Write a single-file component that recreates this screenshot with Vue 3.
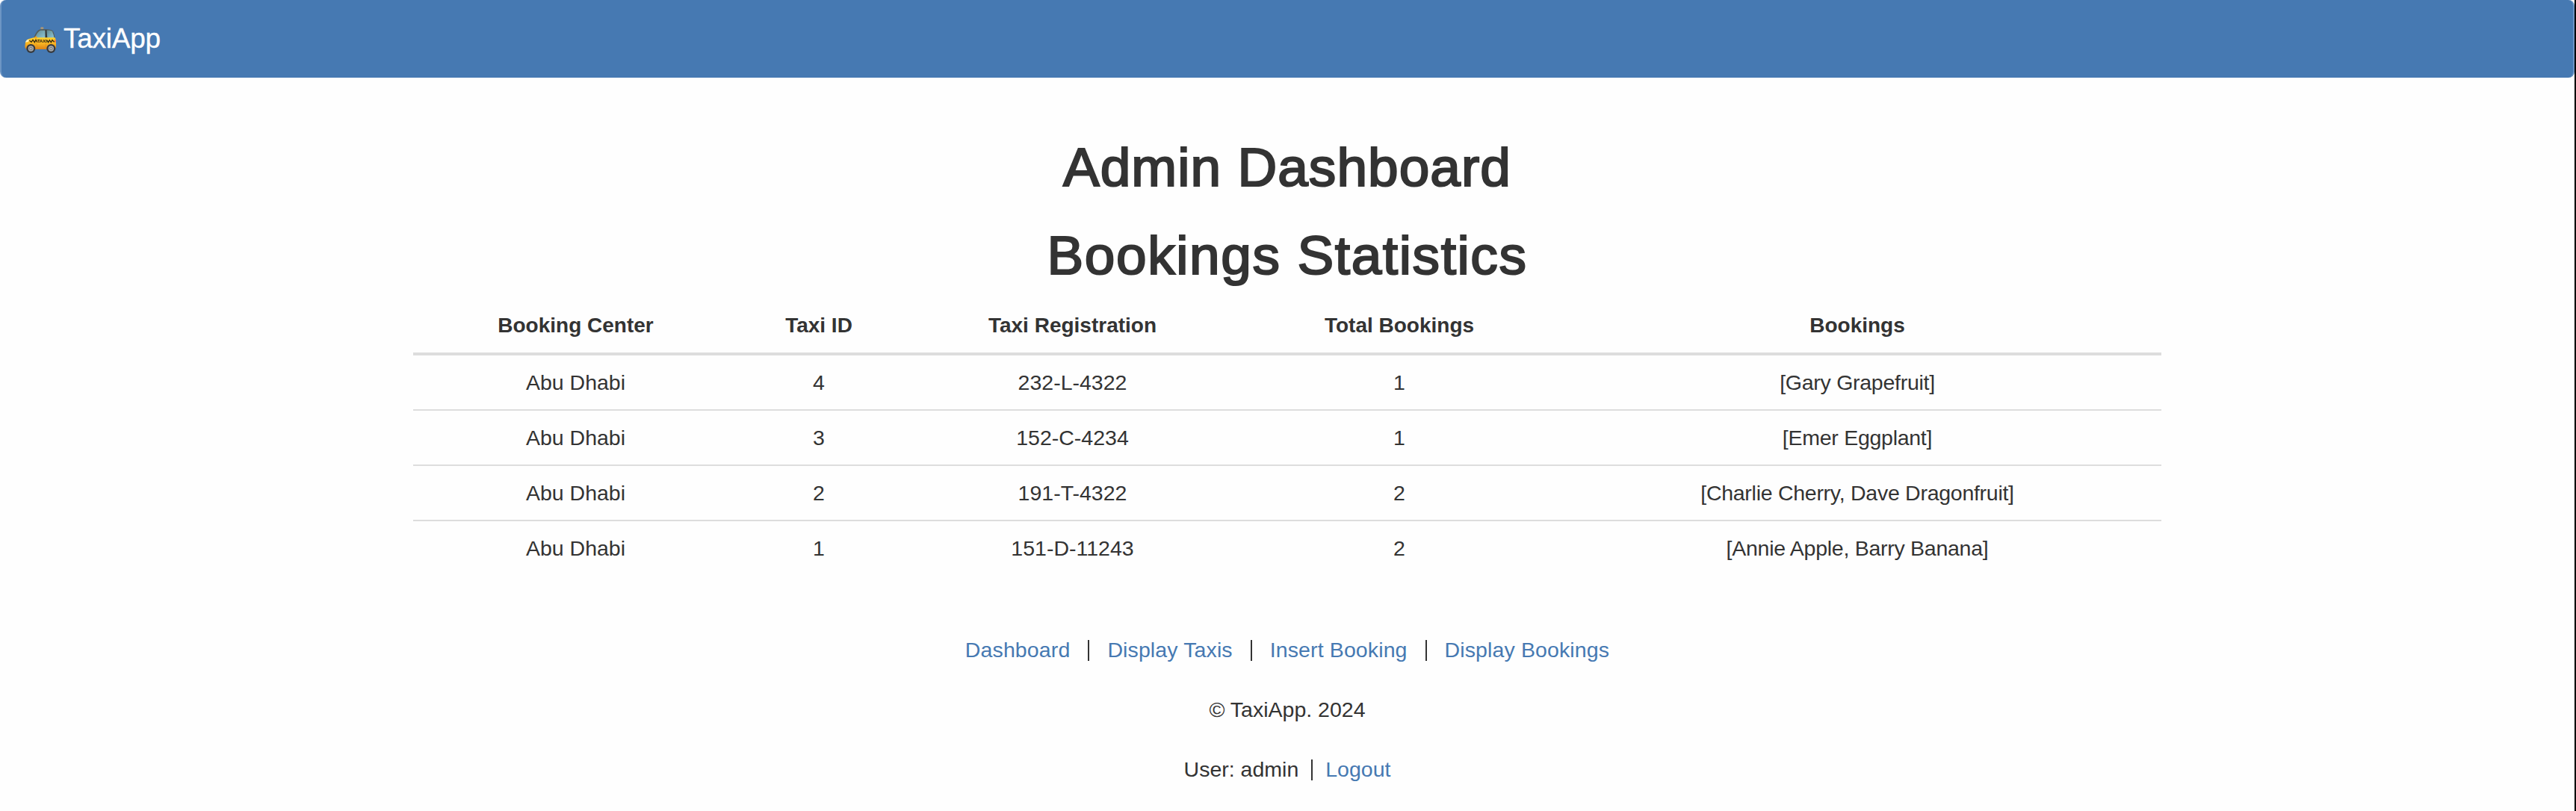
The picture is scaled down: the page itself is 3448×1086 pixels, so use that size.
<script setup>
const columns = ['Booking Center', 'Taxi ID', 'Taxi Registration', 'Total Bookings', 'Bookings']
const rows = [
  ['Abu Dhabi', '4', '232-L-4322', '1', '[Gary Grapefruit]'],
  ['Abu Dhabi', '3', '152-C-4234', '1', '[Emer Eggplant]'],
  ['Abu Dhabi', '2', '191-T-4322', '2', '[Charlie Cherry, Dave Dragonfruit]'],
  ['Abu Dhabi', '1', '151-D-11243', '2', '[Annie Apple, Barry Banana]'],
]
const links = ['Dashboard', 'Display Taxis', 'Insert Booking', 'Display Bookings']
</script>

<template>
  <div class="page">
    <nav class="navbar">
      <a class="brand">
        <svg class="taxi" viewBox="39 36 126 105" aria-hidden="true">
          <defs>
            <linearGradient id="body" x1="0" y1="0" x2="0" y2="1">
              <stop offset="0" stop-color="#ffd22e" />
              <stop offset="0.5" stop-color="#f9b522" />
              <stop offset="1" stop-color="#dc8217" />
            </linearGradient>
            <linearGradient id="glass" x1="0" y1="0" x2="1" y2="1">
              <stop offset="0" stop-color="#5f8790" />
              <stop offset="1" stop-color="#8fc9d6" />
            </linearGradient>
          </defs>
          <rect x="103" y="37" width="12" height="9" rx="3" fill="#a89678" />
          <path d="M74 84C80 66 88 51 97 47Q108 43 132 46Q151 48 154 55Q160 68 161 87L74 88Z" fill="#535c5b" />
          <path d="M80 82C86 65 94 52 103 50H121V81Z" fill="url(#glass)" />
          <path d="M127 50Q146 49 150 55Q156 68 157 81H128Z" fill="url(#glass)" />
          <path d="M122 48H127L130 82H123Z" fill="#343d3d" />
          <path d="M42 99Q44 86 59 83L76 79H160Q165 84 165 99V117Q165 125 158 126H48Q41 125 40 115Z" fill="url(#body)" />
          <path d="M42 98Q45 88 56 86L54 95Z" fill="#fff1cc" />
          <path d="M160 85Q166 90 164 99L159 96Z" fill="#ee6544" />
          <path d="M58 91L66 97L72 88L79 98L84 88L90 98M128 89L134 98L139 89L145 98L150 89L158 97" fill="none" stroke="#3b2c10" stroke-width="4" />
          <text x="89" y="98" class="sign" textLength="39" lengthAdjust="spacingAndGlyphs">TAXI</text>
          <path d="M124 100V123M84 102Q91 110 91 122" fill="none" stroke="#d88b1c" stroke-width="1.5" />
          <rect x="79" y="74" width="10" height="9" rx="4" fill="#f3a51d" />
          <g v-for="x in [64, 145]" :key="x">
            <circle :cx="x" cy="123" r="18" fill="#373a3e" />
            <circle :cx="x" cy="123" r="11" fill="#a8abae" />
            <circle :cx="x" cy="123" r="7" fill="#7c8084" />
            <circle :cx="x" cy="123" r="3" fill="#c7c9ca" />
          </g>
        </svg>
        <span>TaxiApp</span>
      </a>
    </nav>

    <main class="container">
      <h1 class="title">Admin Dashboard</h1>
      <h1 class="subtitle">Bookings Statistics</h1>
      <table>
        <colgroup>
          <col class="center" /><col class="id" /><col class="reg" /><col class="total" /><col />
        </colgroup>
        <thead>
          <tr><th v-for="c in columns" :key="c">{{ c }}</th></tr>
        </thead>
        <tbody>
          <tr v-for="r in rows" :key="r[1]">
            <td v-for="(v, i) in r" :key="i">{{ v }}</td>
          </tr>
        </tbody>
      </table>
    </main>

    <footer>
      <div class="links">
        <template v-for="(l, i) in links" :key="l">
          <i v-if="i" class="bar"></i><a>{{ l }}</a>
        </template>
      </div>
      <div class="line">© TaxiApp. 2024</div>
      <div class="line user"><span>User: admin</span><i class="bar"></i><a>Logout</a></div>
    </footer>
  </div>
</template>

<style>
body {
  margin: 0;
  background: #fff;
}
</style>

<style scoped>
.page {
  box-sizing: border-box;
  width: 3448px;
  height: 1086px;
  overflow: hidden;
  border-right: 2px solid #000;
  background: #fefefe;
  color: #333;
  font: 28.5px/40px "Liberation Sans", Arial, sans-serif;
}
.navbar {
  box-sizing: border-box;
  display: flex;
  align-items: center;
  width: 3446px;
  height: 104px;
  padding-left: 31px;
  border-left: 2px solid #6d95c4;
  border-right: 2px solid #6d95c4;
  border-radius: 8px;
  background: #4679b2;
}
.brand {
  display: flex;
  align-items: center;
  color: #fff;
  font-size: 37px;
  letter-spacing: -0.25px;
  -webkit-text-stroke: 0.3px #fff;
}
.taxi {
  width: 42px;
  height: 35px;
  margin: 3px 10px 0 0;
}
.sign {
  fill: #2c210c;
  stroke: none;
  -webkit-text-stroke: 0;
  font: bold 16px "Liberation Sans", Arial, sans-serif;
}
.container {
  width: 2340px;
  margin: 81px 0 0 553px;
}
h1 {
  margin: 0;
  font-size: 73px;
  font-weight: 400;
  line-height: 78px;
  text-align: center;
  -webkit-text-stroke: 2.2px #333;
}
.title {
  margin-bottom: 40px;
  letter-spacing: 1.05px;
}
.subtitle {
  margin-bottom: 19px;
  letter-spacing: 1.6px;
}
table {
  width: 100%;
  table-layout: fixed;
  border-spacing: 0;
  text-align: center;
}
.center { width: 435px; }
.id { width: 216px; }
.reg { width: 463px; }
.total { width: 412px; }
th,
td {
  padding: 16px;
}
th {
  border-bottom: 4px solid #ddd;
  font-size: 28px;
}
td:last-child {
  letter-spacing: -0.27px;
}
tr + tr td {
  border-top: 2px solid #ddd;
}
footer {
  display: flex;
  flex-direction: column;
  align-items: center;
  gap: 40px;
  width: 3446px;
  margin-top: 80px;
}
.links,
.line {
  display: flex;
  align-items: center;
}
.links {
  letter-spacing: 0.12px;
}
a {
  color: #4679b2;
}
.bar {
  width: 2px;
  height: 28px;
  margin: 2px 24px 0;
  background: #333;
}
.user .bar {
  margin: 2px 17px 0;
}
</style>
